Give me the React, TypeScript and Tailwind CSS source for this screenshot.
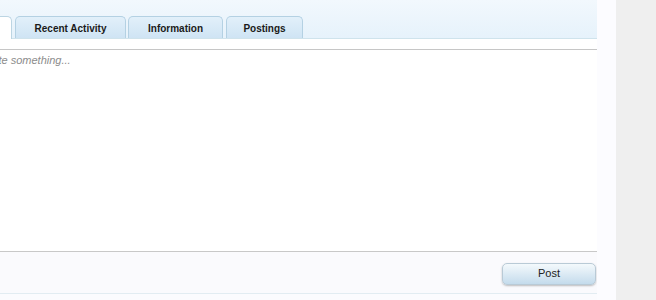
const tabs = ["Recent Activity", "Information", "Postings"];

export default function App() {
  return (
    <div className="flex w-[656px] h-[300px] bg-[#fbfbfe] font-['Liberation_Sans',Arial,sans-serif] overflow-hidden">
      <div className="w-[597px] shrink-0 flex flex-col">
        <div className="h-[39px] flex items-end gap-[3px] bg-gradient-to-b from-[#f2f8fd] to-[#e6f2fb] border-b border-[#cfe3ec]">
          <div className="ml-[-90px] w-[102px] h-[23px] -mb-px rounded-t-[5px] border border-b-0 border-[#bcd5e3] bg-white flex items-center justify-center text-[10px] font-bold text-[#222]">
            Profile Posts
          </div>
          {tabs.map((t, i) => (
            <div
              key={t}
              className={
                "h-[22px] pt-[2px] rounded-t-[5px] border border-b-0 border-[#b4d1e3] bg-gradient-to-b from-[#e2f0fa] to-[#cfe4f4] flex items-center justify-center text-[10px] font-bold text-[#1a1a1a] " +
                (i === 0 ? "w-[111px]" : i === 1 ? "w-[95px] -ml-px" : "w-[77px]")
              }
            >
              {t}
            </div>
          ))}
        </div>
        <div className="h-[10px] bg-white" />
        <div className="h-[202px] border-t border-[#c6c6c6] bg-white">
          <div className="ml-[-18px] mt-[2px] text-[11px] italic text-[#8c8c8c]">Write something...</div>
        </div>
        <div className="h-[42px] border-t border-[#c8c8c8] bg-[#fafafd] flex items-center justify-end pr-px">
          <button
            type="button"
            className="w-[94px] h-[22px] mt-[2px] rounded-[5px] border border-[#b9cad6] bg-gradient-to-b from-[#f4f9fc] to-[#c4dbec] shadow-[0_1px_2px_rgba(0,0,0,0.25)] text-[11px] text-[#222]"
          >
            Post
          </button>
        </div>
        <div className="border-t border-[#e2ecf2]" />
      </div>
      <div className="w-[19px] shrink-0 bg-[#fcfcff]" />
      <div className="flex-1 bg-[#efefef]" />
    </div>
  );
}
